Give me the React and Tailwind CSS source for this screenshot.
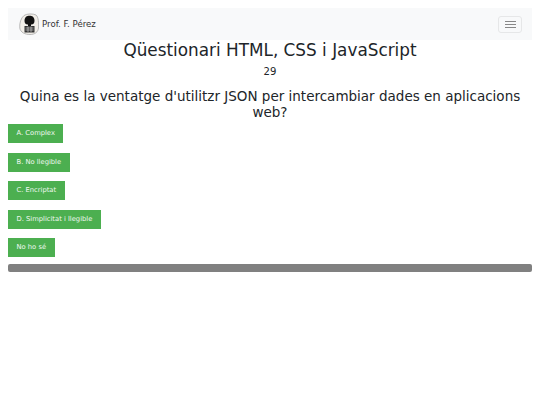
const options = ["A. Complex", "B. No llegible", "C. Encriptat", "D. Simplicitat i llegible", "No ho sé"];

function Logo() {
  return (
    <svg width="20" height="22" viewBox="0 0 20 22" className="shrink-0">
      <path d="M5 2.5 C8 0.5 14 0.5 17 2 C19.5 4 19.8 10 19.5 15 C19 19 16 21.5 11 21.5 C6 21.5 1.5 19.5 0.8 15 C0.3 10 2 5 5 2.5 Z" fill="#f1eee8" stroke="#a8a8a8" strokeWidth="0.8" />
      <path d="M5.5 8 C5.5 4 8 2.8 10.5 2.8 C13 2.8 15.5 4 15.5 8 C15.5 10.5 14 11.5 12.5 11.5 L8.5 11.5 C7 11.5 5.5 10.5 5.5 8 Z" fill="#111" />
      <rect x="9" y="10.5" width="3" height="3" fill="#111" />
      <rect x="5.5" y="13" width="10" height="6.5" fill="#333" />
      <path d="M6.5 15 H14.5 M6.5 17 H14.5 M9 13.5 V19 M12 13.5 V19" stroke="#ddd" strokeWidth="0.6" />
    </svg>
  );
}

export default function App() {
  return (
    <div className="min-h-[405px] bg-white p-2 text-[#212529] font-['DejaVu_Sans',sans-serif]">
      <nav className="flex h-8 items-center justify-between bg-[#f8f9fa] pl-[11px] pr-[10px]">
        <div className="flex items-center gap-[3px]">
          <Logo />
          <span className="text-[8.6px] text-[#333]">Prof. F. Pérez</span>
        </div>
        <button className="flex h-[17px] w-[24px] flex-col items-center justify-center gap-[2px] rounded-[3px] border border-[#e6e7e8]">
          <span className="h-px w-[11px] bg-[#888]" />
          <span className="h-px w-[11px] bg-[#888]" />
          <span className="h-px w-[11px] bg-[#888]" />
        </button>
      </nav>

      <h1 className="text-center text-[16.85px] leading-[20px]">Qüestionari HTML, CSS i JavaScript</h1>
      <p className="mt-[4px] text-center text-[10.1px] leading-[16px]">29</p>
      <h2 className="mt-[7.5px] text-center text-[13.5px] leading-[16px]">
        Quina es la ventatge d'utilitzr JSON per intercambiar dades en aplicacions web?
      </h2>

      <div className="mt-[4.5px] flex flex-col items-start gap-[9.5px]">
        {options.map((option) => (
          <button key={option} className="h-[19px] bg-[#4caf50] px-[8.5px] text-[6.75px] text-[#f0f8f0]">
            {option}
          </button>
        ))}
      </div>

      <div className="mt-[7px] h-2 rounded-[2px] bg-[#808080]" />
    </div>
  );
}
